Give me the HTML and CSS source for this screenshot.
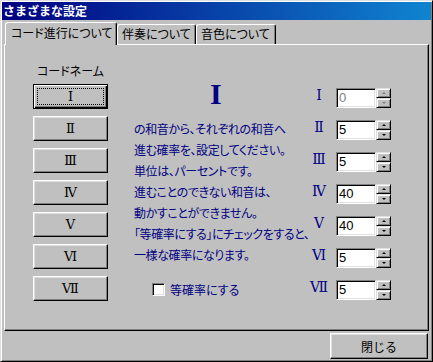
FILE: index.html
```html
<!DOCTYPE html>
<html lang="ja">
  <head>
    <meta charset="UTF-8" />
    <title>さまざまな設定</title>
    <link rel="stylesheet" href="styles.css">
  </head>
  <body>
    <div class="window">
      <div class="titlebar">さまざまな設定</div>

      <div class="tabs">
        <div class="tab active">コード進行について</div>
        <div class="tab second">伴奏について</div>
        <div class="tab third">音色について</div>
      </div>

      <div class="panel">
        <!-- コードネームのボタン -->
        <div class="col-buttons">
          <div class="caption">コードネーム</div>
          <button class="chord focus"><span>Ⅰ</span></button>
          <button class="chord"><span>Ⅱ</span></button>
          <button class="chord"><span>Ⅲ</span></button>
          <button class="chord"><span>Ⅳ</span></button>
          <button class="chord"><span>Ⅴ</span></button>
          <button class="chord"><span>Ⅵ</span></button>
          <button class="chord"><span>Ⅶ</span></button>
        </div>

        <!-- 説明 -->
        <div class="col-text">
          <div class="big">I</div>
          <div class="note">
            <div>の和音から、それぞれの和音へ</div>
            <div>進む確率を、設定してください。</div>
            <div>単位は、パーセントです。</div>
            <div>進むことのできない和音は、</div>
            <div>動かすことができません。</div>
            <div>「等確率にする」にチェックをすると、</div>
            <div>一様な確率になります。</div>
          </div>
          <label class="check"><span class="box"></span>等確率にする</label>
        </div>

        <!-- 確率の入力 -->
        <div class="col-values">
          <div class="row">
            <span class="num">Ⅰ</span>
            <span class="edit disabled">0</span>
            <span class="spin disabled"><span class="up"></span><span class="down"></span></span>
          </div>
          <div class="row">
            <span class="num">Ⅱ</span>
            <span class="edit">5</span>
            <span class="spin"><span class="up"></span><span class="down"></span></span>
          </div>
          <div class="row">
            <span class="num">Ⅲ</span>
            <span class="edit">5</span>
            <span class="spin"><span class="up"></span><span class="down"></span></span>
          </div>
          <div class="row">
            <span class="num">Ⅳ</span>
            <span class="edit">40</span>
            <span class="spin"><span class="up"></span><span class="down"></span></span>
          </div>
          <div class="row">
            <span class="num">Ⅴ</span>
            <span class="edit">40</span>
            <span class="spin"><span class="up"></span><span class="down"></span></span>
          </div>
          <div class="row">
            <span class="num">Ⅵ</span>
            <span class="edit">5</span>
            <span class="spin"><span class="up"></span><span class="down"></span></span>
          </div>
          <div class="row">
            <span class="num">Ⅶ</span>
            <span class="edit">5</span>
            <span class="spin"><span class="up"></span><span class="down"></span></span>
          </div>
        </div>
      </div>

      <div class="footer">
        <button class="close">閉じる</button>
      </div>
    </div>
  </body>
</html>
```

FILE: styles.css
```css
body {
  margin: 0;
  background-color: #c0c0c0;
  font-family: "Noto Sans CJK JP", sans-serif;
  font-size: 12px;
}

.window {
  box-sizing: border-box;
  width: 433px;
  height: 362px;
  padding: 1px;
  background-color: #c0c0c0;
  border: 1px solid;
  border-color: #dfdfdf #000 #000 #dfdfdf;
  box-shadow: inset 1px 1px #fff, inset -1px -1px #808080;
}

.titlebar {
  height: 18px;
  line-height: 18px;
  padding-left: 1px;
  color: #fff;
  font-weight: bold;
  background: linear-gradient(to right, #000080, #1084d0);
}

/* onglets */
.tabs {
  display: flex;
  height: 22px;
  margin-top: 2px;
  margin-left: 3px;
  position: relative;
  z-index: 1;
}

.tab {
  box-sizing: border-box;
  height: 20px;
  margin-top: 2px;
  padding-left: 4px;
  line-height: 18px;
  color: #000;
  white-space: nowrap;
  font-feature-settings: "palt";
  border: 1px solid;
  border-bottom: none;
  border-color: #fff #000 #000 #fff;
  border-radius: 3px 3px 0 0;
  box-shadow: inset -1px 0 #808080;
  background-color: #c0c0c0;
}

.tab.active {
  width: 112px;
  height: 23px;
  margin-top: 0;
  padding-left: 5px;
  line-height: 20px;
}

.tab.second {
  width: 79px;
}

.tab.third {
  width: 80px;
}

.panel {
  box-sizing: border-box;
  display: flex;
  width: 425px;
  height: 287px;
  margin-left: 2px;
  padding: 17px 0 0 28px;
  border: 1px solid;
  border-color: #fff #000 #000 #fff;
  box-shadow: inset -1px -1px #808080;
}

.col-buttons {
  display: flex;
  flex-direction: column;
  gap: 7px;
  width: 75px;
}

.caption {
  height: 18px;
  line-height: 18px;
  padding-left: 4px;
  margin-bottom: -3px;
  color: #000;
  white-space: nowrap;
  font-feature-settings: "palt";
}

button {
  font-family: "Noto Sans CJK JP", sans-serif;
  font-size: 12px;
  color: #000;
  background-color: #c0c0c0;
  border: 1px solid;
  border-color: #fff #000 #000 #fff;
  box-shadow: inset -1px -1px #808080, inset 1px 1px #dfdfdf;
  padding: 0;
  margin: 0;
}

.chord {
  display: flex;
  width: 75px;
  height: 25px;
}

.chord span {
  flex: 1;
  margin: 3px;
  display: flex;
  align-items: center;
  justify-content: center;
  font-family: "DejaVu Serif", serif;
  font-size: 13px;
  border: 1px dotted transparent;
}

.chord.focus {
  border-color: #000;
  box-shadow: inset 1px 1px #fff, inset -1px -1px #000, inset -2px -2px #808080;
}

.chord.focus span {
  border-color: #000;
}

.col-text {
  display: flex;
  flex-direction: column;
  width: 174px;
  margin-left: 26px;
  color: #000080;
}

.big {
  height: 30px;
  line-height: 30px;
  margin-top: 17px;
  padding-left: 76px;
  font-family: "Liberation Serif", serif;
  font-weight: bold;
  font-size: 30px;
}

.note {
  margin-top: 9px;
  line-height: 21px;
  letter-spacing: -0.4px;
  font-feature-settings: "palt";
  white-space: nowrap;
}

.check {
  display: flex;
  align-items: center;
  gap: 5px;
  height: 13px;
  margin-top: 18px;
  margin-left: 18px;
  white-space: nowrap;
  font-feature-settings: "palt";
}

.box {
  box-sizing: border-box;
  width: 13px;
  height: 13px;
  background-color: #fff;
  border: 1px solid;
  border-color: #808080 #fff #fff #808080;
  box-shadow: inset 1px 1px #000, inset -1px -1px #dfdfdf;
}

.col-values {
  display: flex;
  flex-direction: column;
  gap: 12px;
  padding-top: 26px;
}

.row {
  display: flex;
  align-items: center;
  height: 20px;
}

.num {
  width: 22px;
  margin-right: 6px;
  margin-bottom: 6px;
  text-align: center;
  color: #000080;
  font-family: "DejaVu Serif", serif;
  font-size: 14px;
}

.edit {
  box-sizing: border-box;
  width: 40px;
  height: 20px;
  padding-left: 2px;
  line-height: 18px;
  background-color: #fff;
  border: 1px solid;
  border-color: #808080 #fff #fff #808080;
  box-shadow: inset 1px 1px #000, inset -1px -1px #dfdfdf;
  font-family: "Liberation Sans", sans-serif;
  font-size: 13px;
  color: #000;
}

.edit.disabled {
  color: #808080;
}

.spin {
  display: flex;
  flex-direction: column;
  width: 15px;
  height: 20px;
}

.spin span {
  box-sizing: border-box;
  display: flex;
  align-items: center;
  justify-content: center;
  height: 10px;
  border: 1px solid;
  border-color: #dfdfdf #000 #000 #dfdfdf;
  box-shadow: inset 1px 1px #fff, inset -1px -1px #808080;
  background-color: #c0c0c0;
}

.spin span::before {
  content: "";
  border-left: 2px solid transparent;
  border-right: 2px solid transparent;
}

.spin .up::before {
  border-bottom: 2px solid #000;
}

.spin .down::before {
  border-top: 2px solid #000;
}

.spin.disabled .up::before {
  border-bottom-color: #808080;
}

.spin.disabled .down::before {
  border-top-color: #808080;
}

.footer {
  display: flex;
  justify-content: flex-end;
  padding: 2px 3px 0 0;
}

.close {
  width: 98px;
  height: 26px;
}
```
